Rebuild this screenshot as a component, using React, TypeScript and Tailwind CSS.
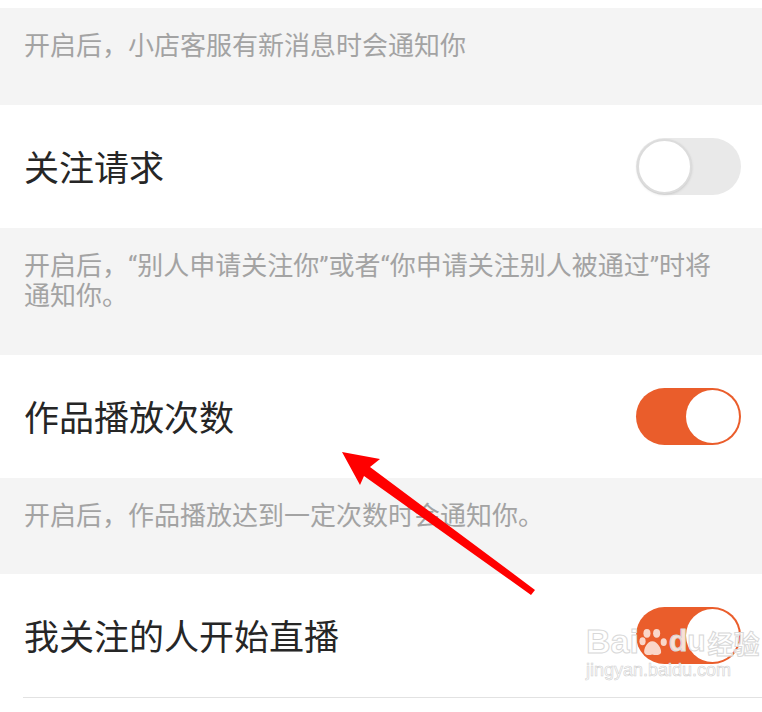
import React from "react";

type Row = { title: string; on: boolean; note?: string };

const rows: Row[] = [
    { title: "关注请求", on: false, note: "开启后，“别人申请关注你”或者“你申请关注别人被通过”时将通知你。" },
    { title: "作品播放次数", on: true, note: "开启后，作品播放达到一定次数时会通知你。" },
    { title: "我关注的人开始直播", on: true },
];

function Toggle({ on }: { on: boolean }) {
    return on ? (
        <div className="flex h-[57px] w-[105px] items-center justify-end rounded-full bg-[#ea5d2b] pr-[2px]">
            <div className="h-[53px] w-[53px] rounded-full bg-white" />
        </div>
    ) : (
        <div className="flex h-[57px] w-[105px] items-center rounded-full bg-[#e9e9e9] pl-[1px]">
            <div className="h-[55px] w-[55px] rounded-full border-2 border-[#dcdcdc] bg-white shadow-sm" />
        </div>
    );
}

function Note({ text, last }: { text: string; last?: boolean }) {
    return (
        <div
            className={
                "bg-[#f4f4f4] pl-[24px] pr-[30px] pt-[23px] text-[26px] leading-[30px] text-[#a3a3a3] " +
                (last ? "pb-[43px]" : "pb-[44px]")
            }
            style={{ fontFamily: 'Roboto, "Noto Sans CJK SC", sans-serif' }}
        >
            {text}
        </div>
    );
}

export default function App() {
    return (
        <div
            className="relative h-[712px] w-[762px] overflow-hidden bg-white"
            style={{ fontFamily: '"Noto Sans CJK SC", "Noto Sans", sans-serif' }}
        >
            <div className="h-[8px] bg-white" />
            <Note text="开启后，小店客服有新消息时会通知你" />
            {rows.map((r, i) => (
                <div key={i}>
                    <div className="flex h-[123px] items-center justify-between bg-white pl-[24px] pr-[21px]">
                        <span className="text-[35px] text-[#262626]">{r.title}</span>
                        <Toggle on={r.on} />
                    </div>
                    {r.note ? (
                        <Note text={r.note} last={i === 1} />
                    ) : (
                        <div className="ml-[23px] h-px bg-[#e2e2e2]" />
                    )}
                </div>
            ))}

            {/* red arrow */}
            <svg className="pointer-events-none absolute left-0 top-0" width="762" height="712" viewBox="0 0 762 712">
                <polygon
                    points="342,452 380,459 370,467 535,590 531,595 364,476 360,485"
                    fill="#ff0000"
                    strokeLinejoin="round"
                />
            </svg>

            {/* baidu watermark */}
            <div className="pointer-events-none absolute left-[586px] top-[624px] flex w-max flex-col items-start">
                <div className="flex flex-nowrap items-end whitespace-nowrap">
                    <span
                        className="text-[34px] font-bold leading-[34px] text-white/80"
                        style={{ fontFamily: '"Liberation Sans", sans-serif', WebkitTextStroke: "1px #d8d8d8" }}
                    >
                        Bai
                    </span>
                    <svg width="30" height="34" viewBox="0 0 34 34" className="-mb-[2px]">
                        <g fill="#ffffff" fillOpacity="0.75">
                            <ellipse cx="9" cy="6" rx="4" ry="5" />
                            <ellipse cx="20" cy="6" rx="4" ry="5" />
                            <ellipse cx="4" cy="15" rx="3.5" ry="4.5" />
                            <ellipse cx="28" cy="16" rx="3.5" ry="4.5" />
                            <path d="M15 15c-6 0-10 9-9 13 1 3 5 3 9 2 4 1 9 1 10-2 1-4-4-13-10-13z" />
                        </g>
                    </svg>
                    <span
                        className="text-[30px] font-bold leading-[34px] text-white/80"
                        style={{ fontFamily: '"Liberation Sans", sans-serif', WebkitTextStroke: "1px #d8d8d8" }}
                    >
                        du
                    </span>
                    <span
                        className="ml-[2px] text-[26px] font-bold leading-[30px] text-white/80"
                        style={{ WebkitTextStroke: "1px #d8d8d8" }}
                    >
                        经验
                    </span>
                </div>
                <span
                    className="mt-[2px] whitespace-nowrap text-[18px] leading-[20px] text-white/80"
                    style={{ fontFamily: '"Liberation Sans", sans-serif', WebkitTextStroke: "0.6px #d0d0d0" }}
                >
                    jingyan.baidu.com
                </span>
            </div>
        </div>
    );
}
